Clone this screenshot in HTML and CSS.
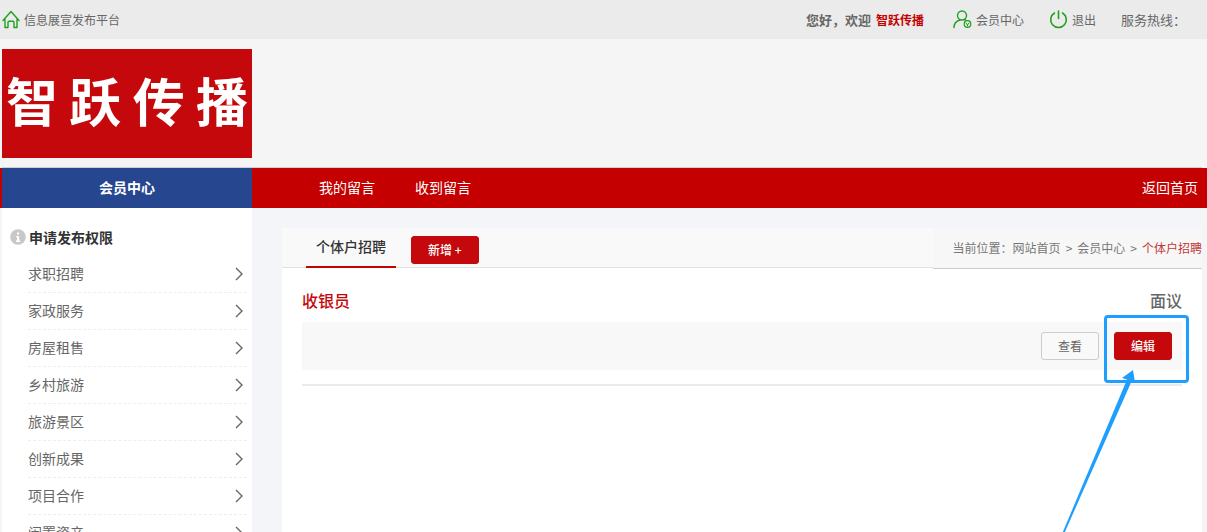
FILE: index.html
```html
<!DOCTYPE html>
<html lang="zh-CN">
<head>
    <meta charset="UTF-8">
    <meta name="viewport" content="width=device-width, initial-scale=1.0">
    <title>会员中心</title>
    <link rel="stylesheet" href="styles.css">
</head>
<body>

    <div class="topbar">
        <a href="#" class="site-name">
            <svg width="18" height="19" viewBox="0 0 18 19" fill="none" stroke="#1fa01f" stroke-width="1.4" stroke-linejoin="round" stroke-linecap="round">
                <path d="M1 10.5L9 1.5l8 9M3 9.5v8h3v-5.200q0-1 1-1h4q1 0 1 1v5.200h3v-8"/>
            </svg>
            信息展宣发布平台
        </a>
        <div class="user-links">
            <p class="welcome">您好，欢迎 <a href="#">智跃传播</a></p>
            <a href="#" class="icon-link">
                <svg width="19" height="19" viewBox="0 0 19 19" fill="none" stroke="#1fa01f" stroke-width="1.4" stroke-linecap="round">
                    <circle cx="9" cy="5.500" r="4.500"/>
                    <path d="M1 17.500c0-4 2.500-6.500 6-7.500M11.500 9.500l1 .5"/>
                    <circle cx="14.500" cy="14" r="3.300" stroke-width="1.200"/>
                    <path d="M13 13l1.500 2 1.500-2M14.500 15v1" stroke-width="1"/>
                </svg>
                会员中心
            </a>
            <a href="#" class="icon-link">
                <svg width="19" height="19" viewBox="0 0 19 19" fill="none" stroke="#1fa01f" stroke-width="1.600" stroke-linecap="round">
                    <path d="M5.500 3a7.800 7.800 0 1 0 8 0M9.500 1v7.500"/>
                </svg>
                退出
            </a>
            <span class="hotline">服务热线：</span>
        </div>
    </div>

    <header class="container">
        <h1 class="logo"><span>智</span><span>跃</span><span>传</span><span>播</span></h1>
    </header>

    <nav class="navbar">
        <div class="container nav-inner">
            <a href="#" class="nav-title">会员中心</a>
            <a href="#" class="nav-link">我的留言</a>
            <a href="#" class="nav-link">收到留言</a>
            <a href="#" class="nav-home">返回首页</a>
        </div>
    </nav>

    <div class="container layout">
        <aside class="sidebar">
            <h2>
                <svg width="16" height="16" viewBox="0 0 16 16">
                    <circle cx="8" cy="8" r="7.800" fill="#c8c8c8"/>
                    <path d="M7 3.500h2.200v2H7zM6.200 7h3v4.500h1V13H6v-1.500h1V8.200h-.8z" fill="#fff"/>
                </svg>
                申请发布权限
            </h2>
            <ul>
                <li><a href="#">求职招聘</a></li>
                <li><a href="#">家政服务</a></li>
                <li><a href="#">房屋租售</a></li>
                <li><a href="#">乡村旅游</a></li>
                <li><a href="#">旅游景区</a></li>
                <li><a href="#">创新成果</a></li>
                <li><a href="#">项目合作</a></li>
                <li><a href="#">闲置资产</a></li>
            </ul>
        </aside>

        <main class="content">
            <div class="content-head">
                <div class="tabs">
                    <a href="#" class="tab">个体户招聘</a>
                    <button type="button" class="btn btn-red btn-add">新增 +</button>
                </div>
                <div class="crumbs">当前位置：<a href="#">网站首页</a><span>&gt;</span><a href="#">会员中心</a><span>&gt;</span><a href="#" class="current">个体户招聘</a></div>
            </div>

            <article class="job">
                <div class="job-title">
                    <h3>收银员</h3>
                    <span>面议</span>
                </div>
                <div class="job-actions">
                    <button type="button" class="btn btn-plain">查看</button>
                    <div class="edit">
                        <button type="button" class="btn btn-red">编辑</button>
                        <div class="marker"></div>
                        <svg class="arrow" width="80" height="170" viewBox="0 0 80 170" fill="#1e9fff">
                            <path d="M73 0L62 8l5 1.500L2 164l2 0L71.500 11.500l3.500 1z"/>
                        </svg>
                    </div>
                </div>
            </article>
        </main>
    </div>

</body>
</html>
```
FILE: styles.css
```css
* {
    box-sizing: border-box;
}
body {
    margin: 0;
    height: 100vh;
    overflow: hidden;
    display: flex;
    flex-direction: column;
    background: #f5f5f5;
    color: #666;
    font-family: "Microsoft YaHei", "Noto Sans CJK SC", sans-serif;
    font-size: 12px;
}
h1, h2, h3, p, ul {
    margin: 0;
    padding: 0;
}
ul {
    list-style: none;
}
a {
    color: inherit;
    text-decoration: none;
}
.container {
    margin: 0 5px 0 2px;
}

/* top bar */
.topbar {
    display: flex;
    flex-shrink: 0;
    justify-content: space-between;
    align-items: center;
    height: 39px;
    padding: 0 21px 0 2px;
    background: #ebebeb;
}
.site-name, .icon-link {
    display: flex;
    align-items: center;
    gap: 4px;
}
.user-links {
    display: flex;
    align-items: center;
    gap: 25px;
}
.welcome {
    margin-right: 4px;
    font-size: 13px;
    font-weight: bold;
}
.welcome a {
    margin-left: 2px;
    font-size: 12px;
    color: #c40000;
}
.hotline {
    font-size: 13px;
}

/* logo */
.logo {
    display: flex;
    justify-content: space-between;
    align-items: center;
    width: 250px;
    height: 109px;
    margin: 10px 0 9px;
    padding: 0 4px 8px;
    background: #c4080b;
    color: #fff;
    font-family: "STXingkai", "Xingkai SC", "Noto Sans CJK SC", cursive;
    font-size: 52px;
}

/* nav */
header {
    border-bottom: 1px solid #d0d0d0;
}
.navbar {
    flex-shrink: 0;
    background: #c40000;
    color: #fff;
    font-size: 14px;
    line-height: 38px;
}
.nav-inner {
    display: flex;
}
.nav-inner a {
    padding-bottom: 2px;
}
.nav-title {
    width: 250px;
    margin-right: 47px;
    background: #26468f;
    font-weight: bold;
    text-align: center;
}
.nav-link {
    padding: 0 20px;
}
.nav-home {
    margin-left: auto;
    padding-right: 4px;
}

.layout {
    flex: 1;
    display: flex;
    gap: 30px;
    min-height: 0;
    background: #f4f5f8;
}

/* sidebar */
.sidebar {
    flex: 0 0 250px;
    padding: 18px 5px 0 8px;
    background: #fff;
}
.sidebar h2 {
    display: flex;
    align-items: center;
    gap: 3px;
    margin-bottom: 8px;
    color: #333;
    font-size: 14px;
    line-height: 22px;
}
.sidebar li {
    margin-left: 18px;
    border-bottom: 1px dashed #eee;
}
.sidebar li a {
    display: block;
    padding-bottom: 2px;
    background: url("data:image/svg+xml,%3Csvg xmlns='http://www.w3.org/2000/svg' width='9' height='14'%3E%3Cpath d='M1 1l6 6-6 6' fill='none' stroke='%23666' stroke-width='1.4'/%3E%3C/svg%3E") no-repeat right 3px center;
    font-size: 14px;
    line-height: 34px;
}

/* content */
.content {
    flex: 1;
    margin-top: 20px;
    background: #fff;
}
.content-head {
    display: flex;
    align-items: flex-start;
    height: 41px;
}
.tabs {
    flex: 1;
    display: flex;
    gap: 15px;
    height: 40px;
    padding-left: 24px;
    background: #f9f9f9;
    border-bottom: 1px solid #e2e2e2;
}
.tab {
    height: 40px;
    padding: 0 10px;
    border-bottom: 2px solid #c40000;
    color: #333;
    font-size: 14px;
    font-weight: 500;
    line-height: 36px;
}
.btn {
    height: 28px;
    padding: 0 16px;
    border: 1px solid #c4080b;
    border-radius: 3px;
    font-family: inherit;
    font-size: 12px;
    line-height: 26px;
    cursor: pointer;
}
.btn-red {
    background: #c4080b;
    color: #fff;
    font-weight: 500;
}
.btn-plain {
    background: #f9f9f9;
    border-color: #ccc;
    color: #666;
}
.btn-add {
    margin-top: 8px;
}
.crumbs {
    height: 41px;
    padding-left: 20px;
    background: #f7f7f7;
    border-bottom: 1px solid #ccc;
    color: #777;
    line-height: 40px;
}
.crumbs span {
    margin: 0 5px;
}
.crumbs .current {
    color: #c0393b;
}

.job {
    margin: 0 20px;
    padding: 20px 0 14px;
    border-bottom: 2px solid #ebebeb;
}
.job-title {
    display: flex;
    justify-content: space-between;
    padding-bottom: 2px;
    font-size: 16px;
    font-weight: 500;
    line-height: 22px;
}
.job-title h3 {
    color: #c4080b;
    font-size: 16px;
    font-weight: 500;
}
.job-actions {
    display: flex;
    justify-content: flex-end;
    gap: 15px;
    margin-top: 9px;
    padding: 10px;
    background: #f8f8f8;
}

/* highlight around the edit button */
.edit {
    position: relative;
}
.marker {
    position: absolute;
    top: -17px;
    left: -10px;
    width: 85px;
    height: 68px;
    border: 3px solid #1e9fff;
    border-radius: 4px;
    pointer-events: none;
}
.arrow {
    position: absolute;
    top: 38px;
    left: -54px;
    pointer-events: none;
}
```
